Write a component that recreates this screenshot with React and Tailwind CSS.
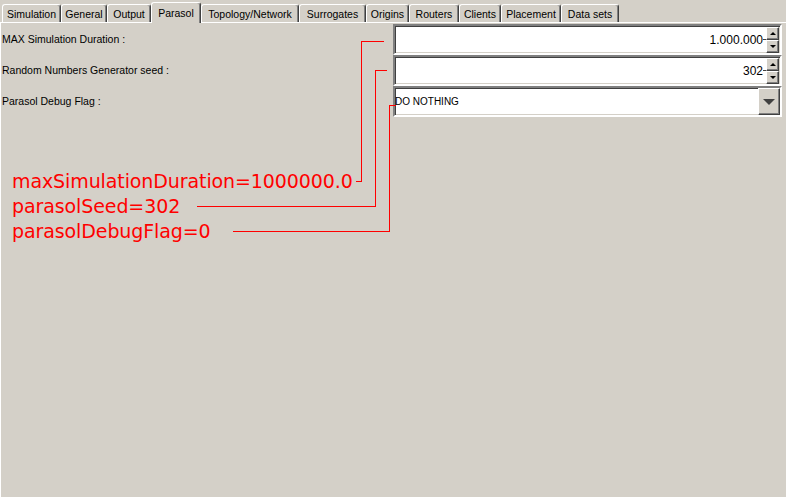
import React from 'react'

const tabs = [
  { label: 'Simulation', w: 'w-[59px]' },
  { label: 'General', w: 'w-[46px]' },
  { label: 'Output', w: 'w-[44px]' },
  { label: 'Parasol', w: 'w-[50px]', selected: true },
  { label: 'Topology/Network', w: 'w-[98px]' },
  { label: 'Surrogates', w: 'w-[67px]' },
  { label: 'Origins', w: 'w-[43px]' },
  { label: 'Routers', w: 'w-[50px]' },
  { label: 'Clients', w: 'w-[42px]' },
  { label: 'Placement', w: 'w-[60px]' },
  { label: 'Data sets', w: 'w-[58px]' },
]

const sunken =
  'border-2 border-t-[#808080] border-l-[#808080] border-r-white border-b-white shadow-[inset_1px_1px_0_#404040,inset_-1px_-1px_0_#d4d0c8]'
const raised =
  'bg-[#d4d0c8] border border-t-white border-l-white border-r-[#404040] border-b-[#404040] shadow-[inset_-1px_-1px_0_#808080]'

const Tab = ({ label, w, selected }) => (
  <div
    className={`${w} flex items-center justify-center border-t border-l border-r border-t-white border-l-white border-r-[#404040] rounded-t-[3px] shadow-[inset_-1px_0_0_#808080] bg-[#d4d0c8] ${
      selected ? 'h-[21px] relative z-10 -mb-px pt-px' : 'h-[18px] pt-[3px]'
    }`}
  >
    {label}
  </div>
)

const Spinner = () => (
  <div className="flex flex-col w-[13px] h-[26px] mr-px">
    <div className={`${raised} h-[13px] flex items-center justify-center`}>
      <span className="w-0 h-0 border-x-[3px] border-x-transparent border-b-[3px] border-b-black" />
    </div>
    <div className={`${raised} h-[13px] flex items-center justify-center`}>
      <span className="w-0 h-0 border-x-[3px] border-x-transparent border-t-[3px] border-t-black" />
    </div>
  </div>
)

const NumberField = ({ value }) => (
  <div className={`${sunken} h-[31px] bg-white flex items-center justify-end`}>
    <span className="text-[12px] text-black">{value}</span>
    <span className="w-[3px] h-px bg-[#404040]" />
    <Spinner />
  </div>
)

const Row = ({ label, children }) => (
  <div className="grid grid-cols-[392px_389px] h-[31px] items-center">
    <div className="pl-px">{label}</div>
    {children}
  </div>
)

export default function App() {
  return (
    <div className="w-[786px] h-[497px] bg-[#d4d0c8] relative overflow-hidden flex flex-col text-[10.5px] text-black font-['Liberation_Sans',Arial,sans-serif]">
      {/* tabs */}
      <div className="flex items-end h-[22px] pl-[2px]">
        {tabs.map((t) => (
          <Tab key={t.label} {...t} />
        ))}
      </div>

      {/* tab panel */}
      <div className="flex-1 border-t border-l border-white pt-px">
        <Row label="MAX Simulation Duration :">
          <NumberField value="1.000.000" />
        </Row>
        <Row label="Random Numbers Generator seed :">
          <NumberField value="302" />
        </Row>
        <Row label="Parasol Debug Flag :">
          <div className={`${sunken} h-[31px] bg-white flex items-stretch`}>
            <span className="flex-1 flex items-center text-[10px]">DO NOTHING</span>
            <div className={`${raised} w-[22px] flex items-center justify-center`}>
              <span className="w-0 h-0 border-x-[6px] border-x-transparent border-t-[6px] border-t-[#404040]" />
            </div>
          </div>
        </Row>
      </div>

      {/* annotations */}
      <svg className="absolute inset-0 pointer-events-none" width="786" height="497" shapeRendering="crispEdges">
        <polyline points="356,181 361,181 361,41 384,41" fill="none" stroke="#ff0000" strokeWidth="1" />
        <polyline points="197,206 375,206 375,70 387,70" fill="none" stroke="#ff0000" strokeWidth="1" />
        <polyline points="233,231 389,231 389,105 396,105" fill="none" stroke="#ff0000" strokeWidth="1" />
      </svg>
      <div className="absolute left-[12px] top-[169px] flex flex-col text-[19px] leading-[25px] tracking-[-0.1px] text-[#ff0000] font-['DejaVu_Sans',sans-serif]">
        <span>maxSimulationDuration=1000000.0</span>
        <span>parasolSeed=302</span>
        <span>parasolDebugFlag=0</span>
      </div>
    </div>
  )
}
